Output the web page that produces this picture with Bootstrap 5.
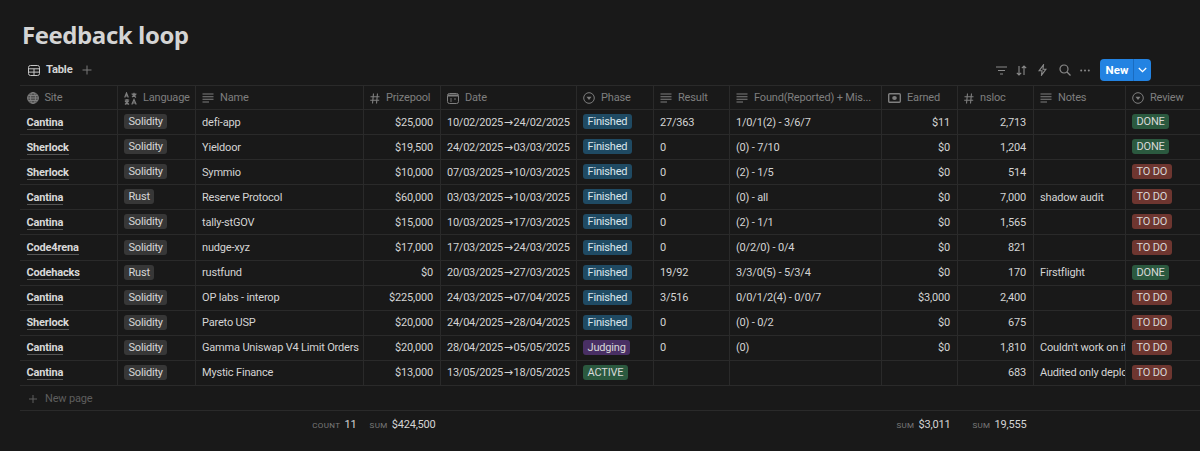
<!doctype html>
<html lang="en" data-bs-theme="dark">
<head>
<meta charset="utf-8">
<title>Feedback loop</title>
<link rel="stylesheet" href="https://cdn.jsdelivr.net/npm/bootstrap@5.3.0/dist/css/bootstrap.min.css">
<style>
html,body{height:451px;overflow:hidden}
body{background:#191919;color:#d4d4d4;font-family:Roboto,"Noto Sans",sans-serif;font-size:11px;letter-spacing:-.18px}
.pagewrap{padding-left:20px;width:1240px}
.pagetitle{font-family:"Open Sans",sans-serif;font-size:24px;font-weight:700;color:#d4d4d4;line-height:32px;margin:0;padding:19px 0 0 2px;height:55px;letter-spacing:-.42px}
.toolrow{height:30px;padding-right:89px;color:#8a8a8a}
.tabname{font-weight:700;color:#d4d4d4;font-size:11.2px;margin-left:6px}
.tabplus{margin-left:9px;margin-right:auto}
.toolbtn{display:block;flex:none}
.gapsort{margin-left:9px}
.gapbolt{margin-left:11px}
.gapfind{margin-left:12px}
.gapdots{margin-left:9px}
.newgroup{margin-left:10px;height:22px}
.newgroup .btn{background:#2383e2;border:0;color:#fff;font-size:11.5px;font-weight:700;padding:0;height:22px;line-height:22px;border-radius:4px}
.newmain{width:34px}
.newcaret{width:18px;border-left:1px solid #1a6cc0!important;display:flex;align-items:center;justify-content:center}
.sheet{table-layout:fixed;width:1220px;margin:0;border-collapse:collapse;--bs-table-bg:transparent;--bs-table-color:#d4d4d4;--bs-table-border-color:#2a2a2a;color:#d4d4d4}
.sheet col:nth-child(1){width:97px}
.sheet col:nth-child(2){width:78px}
.sheet col:nth-child(3){width:168px}
.sheet col:nth-child(4){width:77px}
.sheet col:nth-child(5){width:136px}
.sheet col:nth-child(6){width:77px}
.sheet col:nth-child(7){width:76px}
.sheet col:nth-child(8){width:152px}
.sheet col:nth-child(9){width:76px}
.sheet col:nth-child(10){width:76px}
.sheet col:nth-child(11){width:92px}
.sheet th,.sheet td{padding:1px 6.500px 0;height:25.1px;border:0;border-bottom:1px solid #2a2a2a;border-right:1px solid #2a2a2a;white-space:nowrap;overflow:hidden;vertical-align:middle;font-weight:400;line-height:14px;background:transparent;color:#d4d4d4;box-shadow:none}
.sheet thead th{height:24px;color:#7f7f7f;border-top:1px solid #2a2a2a}
.sheet th:last-child,.sheet td:last-child{border-right:0}
.headin{display:flex;align-items:center;gap:6px}
.headin svg{flex:none}
.sitename{font-weight:700;color:#d8d8d8;border-bottom:1px solid #555;line-height:12px;display:inline-block}
.sheet .numcell{text-align:right}
.sheet .datecell{word-spacing:-1.800px;letter-spacing:-.25px}
.datearrow{font-family:"DejaVu Sans",sans-serif;letter-spacing:0}
.tagpill{display:inline-block;border-radius:3px;padding:0 4.500px;height:15px;line-height:15px;color:#d8d8d8;vertical-align:2px}
.taggrey{background:#373737}
.tagblue{background:#1f4a63;color:#dbe6ec}
.tagpurple{background:#492f64}
.taggreen{background:#2b593f}
.tagred{background:#6e3630}
.sheet .addrow td{border-right:0;color:#5e5e5e;height:25px;padding-left:9px}
.addin{display:flex;align-items:center;gap:8px}
.sheet .sumrow td{border:0;height:26px;color:#d4d4d4;padding-top:3px}
.sumlabel{font-size:8px;letter-spacing:.4px;color:#7a7a7a;margin-right:4px}
.iconsprites{width:0;height:0}
</style>
</head>
<body>
<div class="pagewrap">
<h1 class="pagetitle">Feedback loop</h1>
<div class="toolrow d-flex align-items-center ps-2">
  <svg class="toolbtn" width="12" height="11" viewBox="0 0 12 11" fill="none" stroke="#c4c4c4" stroke-width="1"><rect x=".5" y=".5" width="11" height="10" rx="2"/><path d="M.5 3.800h11M.5 7.100h11M6 3.800v6.700"/></svg>
  <span class="tabname">Table</span>
  <svg class="toolbtn tabplus" width="10" height="10" viewBox="0 0 10 10" stroke="#7a7a7a" stroke-width="1"><path d="M5 .5v9M.5 5h9"/></svg>
  <svg class="toolbtn" width="11" height="9" viewBox="0 0 11 9" stroke="#8a8a8a" stroke-width="1.2"><path d="M0 1h11M2 4.500h7M4 8h3"/></svg>
  <svg class="toolbtn gapsort" width="11" height="11" viewBox="0 0 11 11" fill="none" stroke="#8a8a8a" stroke-width="1.1"><path d="M3 10V1M.8 7.800 3 10l2.200-2.200M8 1v9M5.800 3.200 8 1l2.200 2.200"/></svg>
  <svg class="toolbtn gapbolt" width="9" height="12" viewBox="0 0 9 12" fill="none" stroke="#8a8a8a" stroke-width="1.1"><path d="M5.500.8 1 6.800h3l-.5 4.400 4.500-6H5z"/></svg>
  <svg class="toolbtn gapfind" width="12" height="12" viewBox="0 0 12 12" fill="none" stroke="#8a8a8a" stroke-width="1.2"><circle cx="5" cy="5" r="4"/><path d="m8 8 3.500 3.500"/></svg>
  <svg class="toolbtn gapdots" width="10" height="3" viewBox="0 0 10 3" fill="#8a8a8a"><circle cx="1.200" cy="1.500" r="1"/><circle cx="5" cy="1.500" r="1"/><circle cx="8.800" cy="1.500" r="1"/></svg>
  <div class="btn-group newgroup">
    <button class="btn btn-primary newmain" type="button">New</button>
    <button class="btn btn-primary newcaret" type="button" aria-label="More"><svg width="9" height="6" viewBox="0 0 9 6" fill="none" stroke="#fff" stroke-width="1.3"><path d="m.8 1 3.700 3.600L8.200 1"/></svg></button>
  </div>
</div>
<svg class="iconsprites position-absolute">
  <defs>
    <symbol id="ic-lines" viewBox="0 0 12 10"><path d="M.5 1h11M.5 3.700h11M.5 6.300h11M.5 9h6.500" stroke="#7f7f7f" stroke-width="1.100" fill="none"/></symbol>
    <symbol id="ic-hash" viewBox="0 0 10 11"><path d="M3.500.5 2.500 10.500M7.500.5l-1 10M.5 3.700h9M.2 7.300h9" stroke="#7f7f7f" stroke-width="1.100" fill="none"/></symbol>
    <symbol id="ic-select" viewBox="0 0 12 12"><circle cx="6" cy="6" r="5.300" stroke="#7f7f7f" fill="none"/><path d="M3.500 4.800h5L6 8z" fill="#7f7f7f"/></symbol>
  </defs>
</svg>
<table class="table sheet">
<colgroup><col><col><col><col><col><col><col><col><col><col><col><col></colgroup>
<thead><tr>
<th><span class="headin"><svg width="12" height="12" viewBox="0 0 12 12" fill="none" stroke="#7f7f7f" stroke-width="1"><circle cx="6" cy="6" r="5.400" fill="#4d4d4d"/><ellipse cx="6" cy="6" rx="2.500" ry="5.400"/><path d="M.6 6h10.800M1.300 3.500h9.400M1.300 8.500h9.400"/></svg><span>Site</span></span></th>
<th><span class="headin"><svg width="13" height="13" viewBox="0 0 13 13" fill="none" stroke="#7f7f7f" stroke-width="1.200"><path d="M.7 5.500 2.500 1l1.800 4.500M1.300 4h2.400M7.500 2h5M10 .8V5M8 5l4-2.500M8.500 2.500l3.500 3M.8 8h4.400M3 7v5.500M1 12.500l3.600-3.500M1 9l4 3.500M7.800 12.500 10 7.500l2.200 5M8.500 11h3"/></svg><span>Language</span></span></th>
<th><span class="headin"><svg width="12" height="10"><use href="#ic-lines"/></svg><span>Name</span></span></th>
<th><span class="headin"><svg width="10" height="11"><use href="#ic-hash"/></svg><span>Prizepool</span></span></th>
<th><span class="headin"><svg width="12" height="11" viewBox="0 0 12 11" fill="none" stroke="#7f7f7f"><rect x=".5" y=".5" width="11" height="10" rx="2"/><path d="M1 2.500h10" stroke-width="2"/><path d="M3 6h2M7 6h2M3 8h2" stroke-width=".9"/></svg><span>Date</span></span></th>
<th><span class="headin"><svg width="12" height="12"><use href="#ic-select"/></svg><span>Phase</span></span></th>
<th><span class="headin"><svg width="12" height="10"><use href="#ic-lines"/></svg><span>Result</span></span></th>
<th><span class="headin"><svg width="12" height="10"><use href="#ic-lines"/></svg><span>Found(Reported) + Mis...</span></span></th>
<th><span class="headin"><svg width="13" height="10" viewBox="0 0 13 10"><rect x=".7" y=".7" width="11.600" height="8.600" rx="1" fill="none" stroke="#7f7f7f" stroke-width="1.400"/><ellipse cx="6.500" cy="5" rx="2.300" ry="2" fill="#7f7f7f"/></svg><span>Earned</span></span></th>
<th><span class="headin"><svg width="10" height="11"><use href="#ic-hash"/></svg><span>nsloc</span></span></th>
<th><span class="headin"><svg width="12" height="10"><use href="#ic-lines"/></svg><span>Notes</span></span></th>
<th><span class="headin"><svg width="12" height="12"><use href="#ic-select"/></svg><span>Review</span></span></th>
</tr></thead>
<tbody>
<tr><td><span class="sitename">Cantina</span></td><td><span class="tagpill taggrey">Solidity</span></td><td>defi-app</td><td class="numcell">$25,000</td><td class="datecell">10/02/2025 <span class="datearrow">→</span> 24/02/2025</td><td><span class="tagpill tagblue">Finished</span></td><td>27/363</td><td>1/0/1(2) - 3/6/7</td><td class="numcell">$11</td><td class="numcell">2,713</td><td></td><td><span class="tagpill taggreen">DONE</span></td></tr>
<tr><td><span class="sitename">Sherlock</span></td><td><span class="tagpill taggrey">Solidity</span></td><td>Yieldoor</td><td class="numcell">$19,500</td><td class="datecell">24/02/2025 <span class="datearrow">→</span> 03/03/2025</td><td><span class="tagpill tagblue">Finished</span></td><td>0</td><td>(0) - 7/10</td><td class="numcell">$0</td><td class="numcell">1,204</td><td></td><td><span class="tagpill taggreen">DONE</span></td></tr>
<tr><td><span class="sitename">Sherlock</span></td><td><span class="tagpill taggrey">Solidity</span></td><td>Symmio</td><td class="numcell">$10,000</td><td class="datecell">07/03/2025 <span class="datearrow">→</span> 10/03/2025</td><td><span class="tagpill tagblue">Finished</span></td><td>0</td><td>(2) - 1/5</td><td class="numcell">$0</td><td class="numcell">514</td><td></td><td><span class="tagpill tagred">TO DO</span></td></tr>
<tr><td><span class="sitename">Cantina</span></td><td><span class="tagpill taggrey">Rust</span></td><td>Reserve Protocol</td><td class="numcell">$60,000</td><td class="datecell">03/03/2025 <span class="datearrow">→</span> 10/03/2025</td><td><span class="tagpill tagblue">Finished</span></td><td>0</td><td>(0) - all</td><td class="numcell">$0</td><td class="numcell">7,000</td><td>shadow audit</td><td><span class="tagpill tagred">TO DO</span></td></tr>
<tr><td><span class="sitename">Cantina</span></td><td><span class="tagpill taggrey">Solidity</span></td><td>tally-stGOV</td><td class="numcell">$15,000</td><td class="datecell">10/03/2025 <span class="datearrow">→</span> 17/03/2025</td><td><span class="tagpill tagblue">Finished</span></td><td>0</td><td>(2) - 1/1</td><td class="numcell">$0</td><td class="numcell">1,565</td><td></td><td><span class="tagpill tagred">TO DO</span></td></tr>
<tr><td><span class="sitename">Code4rena</span></td><td><span class="tagpill taggrey">Solidity</span></td><td>nudge-xyz</td><td class="numcell">$17,000</td><td class="datecell">17/03/2025 <span class="datearrow">→</span> 24/03/2025</td><td><span class="tagpill tagblue">Finished</span></td><td>0</td><td>(0/2/0) - 0/4</td><td class="numcell">$0</td><td class="numcell">821</td><td></td><td><span class="tagpill tagred">TO DO</span></td></tr>
<tr><td><span class="sitename">Codehacks</span></td><td><span class="tagpill taggrey">Rust</span></td><td>rustfund</td><td class="numcell">$0</td><td class="datecell">20/03/2025 <span class="datearrow">→</span> 27/03/2025</td><td><span class="tagpill tagblue">Finished</span></td><td>19/92</td><td>3/3/0(5) - 5/3/4</td><td class="numcell">$0</td><td class="numcell">170</td><td>Firstflight</td><td><span class="tagpill taggreen">DONE</span></td></tr>
<tr><td><span class="sitename">Cantina</span></td><td><span class="tagpill taggrey">Solidity</span></td><td>OP labs - interop</td><td class="numcell">$225,000</td><td class="datecell">24/03/2025 <span class="datearrow">→</span> 07/04/2025</td><td><span class="tagpill tagblue">Finished</span></td><td>3/516</td><td>0/0/1/2(4) - 0/0/7</td><td class="numcell">$3,000</td><td class="numcell">2,400</td><td></td><td><span class="tagpill tagred">TO DO</span></td></tr>
<tr><td><span class="sitename">Sherlock</span></td><td><span class="tagpill taggrey">Solidity</span></td><td>Pareto USP</td><td class="numcell">$20,000</td><td class="datecell">24/04/2025 <span class="datearrow">→</span> 28/04/2025</td><td><span class="tagpill tagblue">Finished</span></td><td>0</td><td>(0) - 0/2</td><td class="numcell">$0</td><td class="numcell">675</td><td></td><td><span class="tagpill tagred">TO DO</span></td></tr>
<tr><td><span class="sitename">Cantina</span></td><td><span class="tagpill taggrey">Solidity</span></td><td>Gamma Uniswap V4 Limit Orders</td><td class="numcell">$20,000</td><td class="datecell">28/04/2025 <span class="datearrow">→</span> 05/05/2025</td><td><span class="tagpill tagpurple">Judging</span></td><td>0</td><td>(0)</td><td class="numcell">$0</td><td class="numcell">1,810</td><td>Couldn't work on it</td><td><span class="tagpill tagred">TO DO</span></td></tr>
<tr><td><span class="sitename">Cantina</span></td><td><span class="tagpill taggrey">Solidity</span></td><td>Mystic Finance</td><td class="numcell">$13,000</td><td class="datecell">13/05/2025 <span class="datearrow">→</span> 18/05/2025</td><td><span class="tagpill taggreen">ACTIVE</span></td><td></td><td></td><td class="numcell"></td><td class="numcell">683</td><td>Audited only deployed</td><td><span class="tagpill tagred">TO DO</span></td></tr>
</tbody>
<tfoot>
<tr class="addrow"><td colspan="12"><span class="addin"><svg width="8" height="8" viewBox="0 0 8 8" stroke="#5e5e5e"><path d="M4 0v8M0 4h8"/></svg><span>New page</span></span></td></tr>
<tr class="sumrow"><td></td><td></td><td class="numcell"><span class="sumlabel">COUNT</span>11</td><td class="numcell"><span class="sumlabel">SUM</span>$424,500</td><td></td><td></td><td></td><td></td><td class="numcell"><span class="sumlabel">SUM</span>$3,011</td><td class="numcell"><span class="sumlabel">SUM</span>19,555</td><td></td><td></td></tr>
</tfoot>
</table>
</div>
</body>
</html>
